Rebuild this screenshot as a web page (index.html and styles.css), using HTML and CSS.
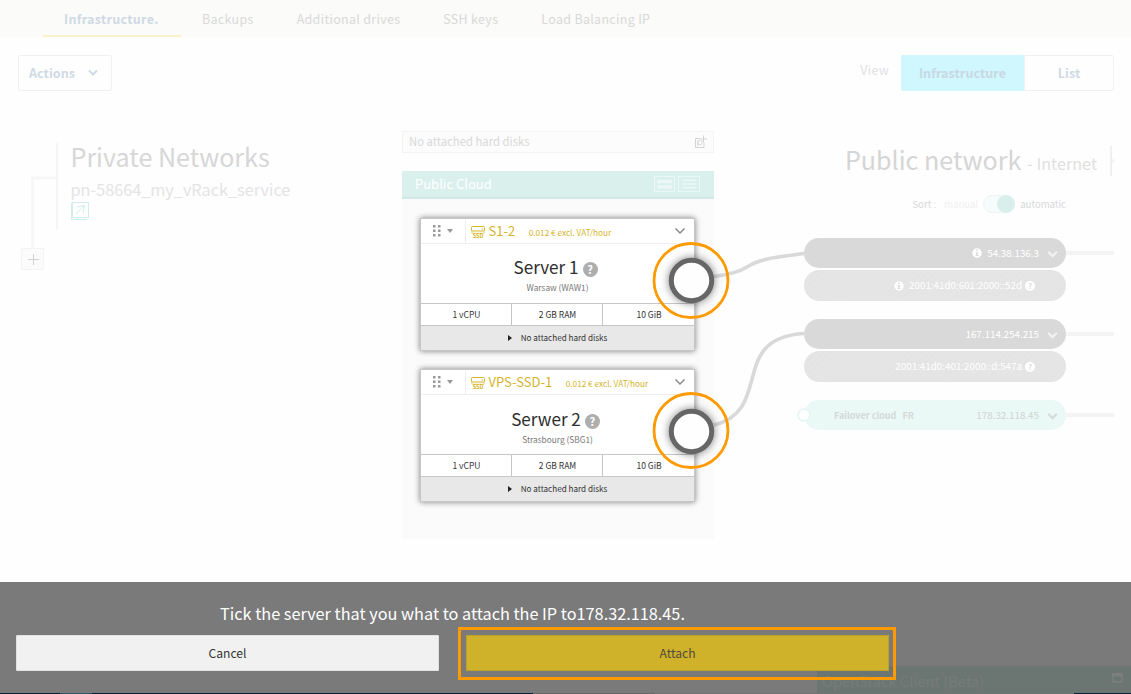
FILE: index.html
```html
<!DOCTYPE html>
<html lang="en">
<head>
<meta charset="utf-8">
<title>Public Cloud - Infrastructure</title>
<link rel="stylesheet" href="styles.css">
</head>
<body>
<svg class="defs" width="0" height="0">
  <symbol id="drive" viewBox="0 0 14 13"><rect x=".5" y=".5" width="13" height="4.500" rx="1" fill="none" stroke="#d5b529"/><path d="M.8 5v1.500q0 .8 1 .8h10.400q1 0 1-.8V5" fill="none" stroke="#d5b529" stroke-width=".6"/><circle cx="11.200" cy="3" r=".7" fill="#d5b529"/></symbol>
  <symbol id="chev" viewBox="0 0 12 8"><path d="M1.500 1.500L6 6l4.500-4.500" fill="none" stroke="currentColor" stroke-width="1.500"/></symbol>
  <symbol id="chevb" viewBox="0 0 10 8"><path d="M1 1.500L5 5.500l4-4" fill="none" stroke="currentColor" stroke-width="2"/></symbol>
  <symbol id="dots" viewBox="0 0 8 12"><path d="M0 0h2.500v2.500H0zM0 4.500h2.500V7H0zM0 9h2.500v2.500H0zM5 0h2.500v2.500H5zM5 4.500h2.500V7H5zM5 9h2.500v2.500H5z" fill="#999"/></symbol>
  <symbol id="info" viewBox="0 0 10 10"><circle cx="5" cy="5" r="4.700" fill="#fff"/><path d="M4.100 1.600h1.700v1.300H4.100zM3.600 4h2.200v3h.7v1H3.500V7h.7V5h-.6z" fill="#dcdcdc"/></symbol>
</svg>

<nav class="tabs">
  <a class="tab active">Infrastructure.</a>
  <a class="tab">Backups</a>
  <a class="tab">Additional drives</a>
  <a class="tab">SSH keys</a>
  <a class="tab">Load Balancing IP</a>
</nav>

<div class="toolbar">
  <button class="actions"><span>Actions</span><svg width="10" height="8"><use href="#chevb"/></svg></button>
  <div class="view"><span class="view-label">View</span><button class="seg on">Infrastructure</button><button class="seg off">List</button></div>
</div>

<main class="canvas">
  <section class="private">
    <svg class="branch" width="37" height="128" viewBox="0 0 37 128">
      <path d="M36 2v86" stroke="#f5f5f5" stroke-width="2"/><path d="M35 37H11.500v70" fill="none" stroke="#f7f7f7" stroke-width="3"/>
      <rect x=".5" y="107.500" width="22" height="21" fill="#fbfbfb" stroke="#f4f4f4"/><path d="M7 118.500h11M12.500 113v11" stroke="#d2d2d2"/>
    </svg>
    <div class="private-text">
      <h2>Private Networks</h2>
      <p>pn-58664_my_vRack_service</p>
      <svg width="19" height="19" viewBox="0 0 19 19"><g fill="none" stroke="#d5ede9"><rect x="1.500" y="1.500" width="16" height="15"/><path d="M.5 2v16.500H16M5 13L13 5M6 6l7.500-1.500-1.500 7.500"/></g></svg>
    </div>
  </section>

  <section class="cloud">
    <div class="disks"><span>No attached hard disks</span>
      <svg width="13" height="14" viewBox="0 0 13 14"><g fill="none" stroke="#d3d3d3"><path d="M6 3.500H1.500v9h8.500V8"/><path d="M9.500 .5v7M6 4h7"/><circle cx="6" cy="7.500" r="2.200" stroke-width=".8"/><path d="M3.500 5.500v5l2-1" stroke-width=".8"/></g></svg>
    </div>
    <div class="panel">
      <header class="panel-head"><span>Public Cloud</span>
        <svg width="46" height="16" viewBox="0 0 46 16"><g fill="none" stroke="#ecf8f6"><rect x=".5" y=".5" width="20" height="15"/><rect x="24.500" y=".5" width="21" height="15"/><path d="M3 5.500h15M3 11h15" stroke-width="3.500"/><path d="M28 4.500h14M28 8h14M28 11.500h14" stroke-width="1.300"/></g></svg>
      </header>
      <article class="card">
        <div class="card-head"><div class="grip"><svg width="8" height="12"><use href="#dots"/></svg><i class="caret"></i></div><svg class="ssd" width="14" height="13" viewBox="0 0 14 13"><use href="#drive" width="14" height="13"/><text x="7" y="12.300" text-anchor="middle">SSD</text></svg><span class="model">S1-2</span><span class="price">0.012 € excl. VAT/hour</span><svg class="chev" width="12" height="8"><use href="#chev"/></svg></div>
        <div class="card-body"><h3><span>Server 1</span><i class="help">?</i></h3><p>Warsaw (WAW1)</p></div>
        <div class="specs"><span>1 vCPU</span><span>2 GB RAM</span><span>10 GiB</span></div>
        <div class="no-disks"><i></i><span>No attached hard disks</span></div>
      </article>
      <article class="card">
        <div class="card-head"><div class="grip"><svg width="8" height="12"><use href="#dots"/></svg><i class="caret"></i></div><svg class="ssd" width="14" height="13" viewBox="0 0 14 13"><use href="#drive" width="14" height="13"/><text x="7" y="12.300" text-anchor="middle">SSD</text></svg><span class="model">VPS-SSD-1</span><span class="price">0.012 € excl. VAT/hour</span><svg class="chev" width="12" height="8"><use href="#chev"/></svg></div>
        <div class="card-body second"><h3><span>Serwer 2</span><i class="help">?</i></h3><p>Strasbourg (SBG1)</p></div>
        <div class="specs"><span>1 vCPU</span><span>2 GB RAM</span><span>10 GiB</span></div>
        <div class="no-disks"><i></i><span>No attached hard disks</span></div>
      </article>
    </div>
  </section>

  <section class="public">
    <div class="public-title"><h2>Public network</h2><small>- Internet</small><i></i></div>
    <div class="sort"><span>Sort :</span><span class="manual">manual</span><i class="toggle"></i><span>automatic</span></div>
    <div class="ip main"><div class="pill"><svg width="10" height="10"><use href="#info"/></svg><span>54.38.136.3</span><svg class="c" width="11" height="9"><use href="#chevb"/></svg></div><i class="wire"></i></div>
    <div class="ip v6"><div class="pill"><svg width="10" height="10"><use href="#info"/></svg><span>2001:41d0:601:2000::52d</span><i class="help">?</i></div></div>
    <div class="ip main gap"><div class="pill"><span>167.114.254.215</span><svg class="c" width="11" height="9"><use href="#chevb"/></svg></div><i class="wire"></i></div>
    <div class="ip v6"><div class="pill"><span>2001:41d0:401:2000::d:547a</span><i class="help">?</i></div></div>
    <div class="ip failover gap"><div class="pill"><i class="port"></i><b class="fo">Failover cloud</b><b>FR</b><span class="addr">178.32.118.45</span><svg class="c" width="11" height="9"><use href="#chevb"/></svg></div><i class="wire"></i></div>
  </section>
</main>

<footer class="dialog">
  <p class="question">Tick the server that you what to attach the IP to178.32.118.45.</p>
  <div class="buttons"><button class="cancel">Cancel</button><button class="attach"><span>Attach</span></button></div>
  <div class="client"><span>OpenStack Client (Beta)</span><svg width="11" height="10" viewBox="0 0 11 10"><path d="M1 2v7h9V2z" fill="none" stroke="#7b807e" stroke-width="1.500"/><path d="M0 0h11v3.500H0z" fill="#7b807e"/></svg></div>
  <div class="edge"></div>
</footer>

<svg class="links" width="1131" height="694" viewBox="0 0 1131 694">
  <g fill="none" stroke="#d9d9d9" stroke-width="3.600"><path d="M714 276.500C730 274.500 739 272 747 267C762 257 785 256.500 804 253.500"/><path d="M714 425C774 410 728 338 804 333.500"/></g>
  <g class="ports"><circle cx="691.500" cy="280.500" r="20.200"/><circle cx="691.500" cy="431.500" r="20.200"/></g>
  <g fill="none" stroke="#ff9a00" stroke-width="2.800"><circle cx="691" cy="280.500" r="37"/><circle cx="691" cy="430.500" r="37"/></g>
</svg>
</body>
</html>
```
FILE: styles.css
```css
* { box-sizing: border-box; }
body { margin: 0; width: 1131px; height: 694px; overflow: hidden; position: relative; display: flex; flex-direction: column; background: #fefefe; font-family: "Noto Sans CJK SC", "Source Sans Pro", sans-serif; color: #d9d9d9; white-space: nowrap; }
h2, h3, p { margin: 0; font-weight: 400; }
i { font-style: normal; }
button { font-family: inherit; padding: 0; border: 0; background: none; color: inherit; }
svg { flex: none; }
.defs { position: absolute; }

.tabs { display: flex; height: 37px; flex: none; background: #fbfbf9; padding-left: 43px; font-size: 12.5px; line-height: 37px; letter-spacing: .3px; }
.tab { margin-right: 43px; }
.tab.active { width: 138px; margin-right: 21px; padding-left: 21px; color: #cfd9e5; font-weight: 700; border-bottom: 2px solid #faf0cb; }

.toolbar { display: flex; justify-content: space-between; padding: 18px 17px 0 18px; height: 94px; flex: none; }
.toolbar button { height: 36px; font-size: 12.5px; font-weight: 700; color: #cfdae5; letter-spacing: .08px; border: 1px solid #f0f1f2; border-radius: 2px; padding-bottom: 2px; }
.toolbar .actions { width: 94px; display: flex; align-items: center; padding: 0 13px 1px 10px; justify-content: space-between; }
.actions svg { margin-top: 1px; }
.view { display: flex; }
.view-label { font-size: 12.500px; line-height: 29px; letter-spacing: .3px; margin-right: 12px; color: #dfe2e5; }
.toolbar .on { width: 123px; background: #cff7fd; border-color: #cff7fd; border-radius: 2px 0 0 2px; color: #c9d7e3; }
.toolbar .off { width: 90px; border-radius: 0 2px 2px 0; }

.canvas { display: flex; height: 451px; flex: none; }
.private { width: 402px; display: flex; padding: 10px 0 0 21px; }
.branch { overflow: visible; }
.private-text { padding: 0 0 0 12.500px; }
.private h2 { font-size: 25.100px; line-height: 32px; margin-top: -1px; color: #d7d7d7; }
.private p { font-size: 16.250px; line-height: 28px; margin-top: 3px; color: #e4e4e4; }
.private-text > svg { display: block; margin-top: -2px; }

.cloud { width: 312px; }
.disks { height: 22px; border: 1px solid #f3f3f3; background: #fcfcfc; display: flex; justify-content: space-between; align-items: center; padding: 0 6px 1px; font-size: 11.300px; }
.disks span { margin-top: -1px; }
.panel { margin-top: 18px; height: 368px; background: #fbfbfb; }
.panel-head { height: 28px; background: #daf0ec; border-bottom: 2px solid #d2e8e4; display: flex; justify-content: space-between; align-items: center; padding: 0 14px 0 13px; color: #fff; font-size: 13px; margin-bottom: 19px; }
.panel-head span { margin-top: -2px; }
.card { margin: 0 19px 18px 18px; height: 133px; border: 1px solid #c6c6c6; background: #fff; box-shadow: 0 0 6px rgba(0,0,0,.5); }
.card-head { height: 25px; border-bottom: 1px solid #eee; display: flex; align-items: center; padding-right: 8.500px; color: #d4b42a; }
.grip { width: 45px; height: 24px; border-right: 1px solid #eee; display: flex; align-items: center; padding-left: 12px; gap: 6px; margin-right: 5px; flex: none; }
.caret { border: 3.500px solid transparent; border-top: 4px solid #999; border-bottom: 0; }
.ssd { margin: 3px 3.500px 0 0; }
.ssd text { font-size: 5.500px; font-weight: 700; fill: #d5b529; }
.model { font-size: 13px; line-height: 24px; }
.price { font-size: 8.230px; margin: 2px 0 0 13.500px; }
.chev { margin-left: auto; color: #888; }
.card-body { height: 59px; padding-top: 10px; text-align: center; }
.card-body.second { padding-top: 11px; }
.card h3 { font-size: 17.100px; line-height: 26px; color: #2e2e2e; display: flex; justify-content: center; align-items: center; gap: 4px; padding-right: 4px; }
.card h3 .help { flex: none; width: 15px; height: 15px; border-radius: 50%; background: #aeaeae; color: #fff; font-size: 11px; font-weight: 700; line-height: 14px; margin-top: 4px; }
.card p { font-size: 8.300px; line-height: 14px; color: #777; }
.specs { display: grid; grid-template-columns: 90px 91px 92px; height: 23px; border: solid #c6c6c6; border-width: 1px 0; font-size: 8.500px; line-height: 21px; text-align: center; color: #333; }
.specs span { padding-left: 1px; }
.specs span + span { border-left: 1px solid #c6c6c6; }
.no-disks { height: 24px; background: #e8e8e8; display: flex; align-items: center; justify-content: center; font-size: 8.150px; color: #333; gap: 9px; padding-bottom: 1px; }
.no-disks i { border: 3px solid transparent; border-left: 4px solid #222; border-right: 0; margin-top: 1px; }

.public { width: 417px; padding: 15px 17px 0 90px; }
.public-title { height: 30px; display: flex; justify-content: flex-end; align-items: baseline; line-height: 27px; }
.public-title h2 { font-size: 25.100px; color: #d5d5d5; }
.public-title small { font-size: 16.200px; margin: 0 13px 0 6px; color: #e0e0e0; }
.public-title i { width: 4px; height: 30px; align-self: flex-start; background: linear-gradient(#f1f1f1, #f1f1f1) 0 0 / 2px 30px no-repeat, linear-gradient(#f5f5f5, #f5f5f5) 2px 13px / 2px 4px no-repeat; }
.sort { height: 19px; display: flex; align-items: center; justify-content: flex-end; margin: 18px 48px 25px 0; font-size: 9.600px; color: #d8d8d8; }
.manual { color: #f0f0f0; margin: 0 5px 0 8px; }
.toggle { width: 32px; height: 18px; border-radius: 9px; background: #f6fcfb; border: 1px solid #edf5f3; margin-right: 5px; display: flex; justify-content: flex-end; }
.toggle::before { content: ""; width: 18px; height: 18px; border-radius: 50%; background: #d9efeb; margin: -1px -1px 0 0; }
.ip { display: flex; align-items: center; }
.pill { width: 262px; height: 30px; border-radius: 16px; background: #d9d9d9; display: flex; justify-content: flex-end; align-items: center; padding-right: 8px; color: #fff; font-size: 9.820px; }
.pill > span { margin-top: -1px; }
.pill .c { margin: 3px 0 0 8px; color: #f1f1f1; }
.pill svg:first-child { margin-right: 5px; }
.wire { width: 48px; height: 4px; background: #f4f4f4; }
.v6 { margin-top: 2px; }
.v6 .pill { height: 31px; padding-right: 31px; background: repeating-linear-gradient(135deg, #e5e5e5 0 4px, #e3e3e3 4px 5px); }
.pill .help { width: 10px; height: 10px; border-radius: 50%; background: #fff; color: #ddd; font-size: 8px; line-height: 10px; text-align: center; font-weight: 700; margin-left: 3px; }
.gap { margin-top: 18px; }
.failover .pill { background: #eaf8f6; color: #cfd4d3; }
.failover b { color: #d5d9d8; font-size: 9px; margin-right: 6px; }
.failover .fo { margin-left: 23px; }
.failover .port { width: 14px; height: 14px; border: 2px solid #e8f7f5; background: #fff; border-radius: 50%; margin-left: -7px; }
.failover .addr { margin-left: auto; }
.failover .pill .c { color: #d5dddb; }

.dialog { height: 112px; flex: none; background: #7a7a7a; color: #fff; }
.question { height: 53px; padding: 16px 0 0 220px; font-size: 16.270px; line-height: 31px; }
.buttons { display: flex; gap: 19px; padding-left: 16px; height: 31px; align-items: flex-start; }
.buttons button { font-size: 12.100px; }
.buttons .cancel { width: 423px; height: 36px; background: #f1f1f1; border: 1px solid #e2e2e2; border-radius: 1px; color: #333; padding-bottom: 2px; }
.buttons .attach { position: relative; width: 438px; height: 53px; margin-top: -8px; border: 3px solid #ff9a00; color: #504c3c; z-index: 1; }
.attach span { display: flex; align-items: center; justify-content: center; height: 36px; margin: 0 4px 1px 5px; padding-bottom: 1px; background: #cfb12a; border: 1px solid #bea02a; }
.client { margin-left: 817px; height: 27px; background: #6b7572; color: #767c79; display: flex; align-items: center; justify-content: space-between; padding: 2px 8px 0 5px; font-size: 14.700px; }
.client svg { margin-top: -5px; }
.edge { height: 1px; background: linear-gradient(90deg, #06213a 0 60px, #2d566b 60px 92px, #082039 92px 533px, #666 533px 655px, #737373 655px 1074px, #06213a 1074px); }

.links { position: absolute; left: 0; top: 0; pointer-events: none; z-index: 2; }
.ports circle { fill: #fefefe; stroke: #666; stroke-width: 5; filter: drop-shadow(0 0 4px rgba(0,0,0,.5)); }
```
